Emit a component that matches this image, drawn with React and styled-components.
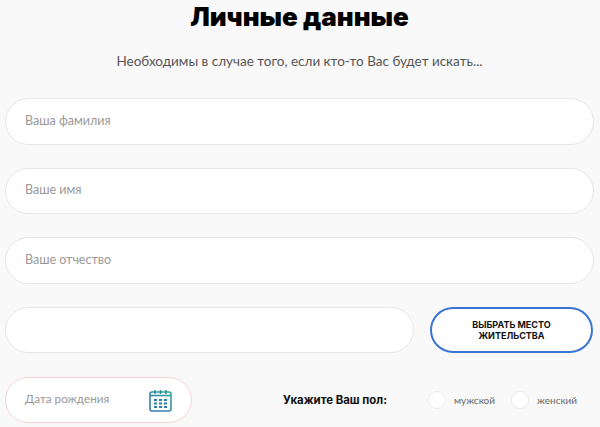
import styled, { createGlobalStyle } from "styled-components";

const GlobalStyle = createGlobalStyle`
  html, body {
    margin: 0;
    padding: 0;
    background: #f9f9f9;
    overflow: hidden;
  }
  * {
    box-sizing: border-box;
  }
`;

const Page = styled.main`
  width: 600px;
  height: 427px;
  overflow: hidden;
  padding: 0 6px 0 5px;
  font-family: "Lato", "Liberation Sans", sans-serif;
`;

const Title = styled.h1`
  margin: 0;
  height: 34px;
  font-family: "Inter", "Liberation Sans", sans-serif;
  font-size: 26px;
  font-weight: 900;
  line-height: 34px;
  text-align: center;
  color: #000;
`;

const Subtitle = styled.p`
  margin: 17px 0 0;
  height: 20px;
  font-size: 13.5px;
  line-height: 20px;
  text-align: center;
  color: #555;
`;

const Form = styled.form`
  display: flex;
  flex-direction: column;
  gap: 23px;
  margin-top: 27px;
`;

const Field = styled.input`
  display: block;
  flex: none;
  width: ${(props) => props.$width || "100%"};
  height: 46.5px;
  padding: 0 19px 2px;
  border: 1px solid #e6e6e6;
  border-radius: 24px;
  background: #fff;
  outline: none;
  font-family: inherit;
  font-size: 12.5px;

  &::placeholder {
    color: #999;
    opacity: 1;
  }
`;

const AddressRow = styled.div`
  display: flex;
  gap: 16px;
`;

const AddressButton = styled.button`
  flex: none;
  width: 163px;
  height: 46.5px;
  padding: 0 24px;
  border: 2px solid #3b74d6;
  border-radius: 24px;
  background: #fff;
  font-family: "Inter", "Liberation Sans", sans-serif;
  font-size: 9px;
  font-weight: 700;
  line-height: 11px;
  text-transform: uppercase;
  color: #111;
`;

const BottomRow = styled.div`
  display: flex;
  align-items: center;
  margin-top: 1px;
`;

const DateBox = styled.label`
  display: flex;
  flex: none;
  align-items: center;
  justify-content: space-between;
  width: 187px;
  height: 46px;
  padding: 0 19px 0 19px;
  border: 1px solid #f5d3d3;
  border-radius: 23px;
  background: #fff;
  font-size: 11.75px;
  color: #999;
`;

const DateText = styled.span`
  margin-bottom: 4px;
`;

const GenderGroup = styled.div`
  display: flex;
  align-items: center;
  margin-left: 91px;
  white-space: nowrap;
`;

const GenderLabel = styled.span`
  margin-right: 41px;
  font-family: "Inter", "Liberation Sans", sans-serif;
  font-size: 11.4px;
  font-weight: 700;
  color: #111;
`;

const GenderOption = styled.label`
  display: flex;
  align-items: center;
  gap: 8px;
  margin-right: 16px;
  font-size: 10px;
  color: #666;
`;

const Radio = styled.span`
  width: 18px;
  height: 18px;
  border: 1px solid #ececec;
  border-radius: 50%;
  background: #fff;
`;

const CalendarIcon = () => (
  <svg width="23" height="23" viewBox="0 0 23 23" fill="none">
    <defs>
      <linearGradient id="calendar" x1="0" y1="23" x2="23" y2="0" gradientUnits="userSpaceOnUse">
        <stop offset="0" stopColor="#3a6fc0" />
        <stop offset="1" stopColor="#2fae8e" />
      </linearGradient>
    </defs>
    <rect x="1" y="3" width="21" height="19" rx="2" stroke="url(#calendar)" strokeWidth="1.6" />
    <path d="M1 6.5h21" stroke="url(#calendar)" strokeWidth="1.6" />
    <path d="M6 1v4M11.5 1v4M17 1v4" stroke="#2b8f8f" strokeWidth="1.5" />
    <path
      d="M5 10h3v2H5zM10 10h3v2h-3zM15 10h3v2h-3zM5 13.5h3v2H5zM10 13.5h3v2h-3zM15 13.5h3v2h-3zM5 17h3v2H5zM10 17h3v2h-3zM15 17h3v2h-3z"
      fill="#2c7fa8"
    />
  </svg>
);

export default function App() {
  return (
    <Page>
      <GlobalStyle />
      <Title>Личные данные</Title>
      <Subtitle>Необходимы в случае того, если кто-то Вас будет искать...</Subtitle>
      <Form>
        <Field placeholder="Ваша фамилия" />
        <Field placeholder="Ваше имя" />
        <Field placeholder="Ваше отчество" />
        <AddressRow>
          <Field $width="409px" />
          <AddressButton type="button">Выбрать место жительства</AddressButton>
        </AddressRow>
        <BottomRow>
          <DateBox>
            <DateText>Дата рождения</DateText>
            <CalendarIcon />
          </DateBox>
          <GenderGroup>
            <GenderLabel>Укажите Ваш пол:</GenderLabel>
            <GenderOption>
              <Radio />
              мужской
            </GenderOption>
            <GenderOption>
              <Radio />
              женский
            </GenderOption>
          </GenderGroup>
        </BottomRow>
      </Form>
    </Page>
  );
}
